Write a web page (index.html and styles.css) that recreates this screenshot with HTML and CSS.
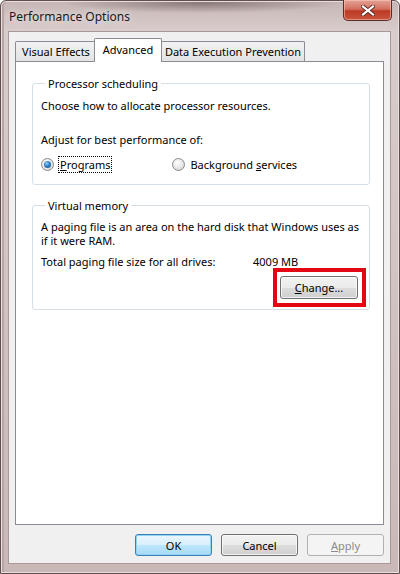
FILE: index.html
```html
<!DOCTYPE html>
<html lang="en">
<head>
    <meta charset="UTF-8">
    <title>Performance Options</title>
    <link rel="stylesheet" href="styles.css">
</head>
<body>
    <div class="window">
        <div class="titlebar">
            <span class="title">Performance Options</span>
            <button class="close-btn" aria-label="Close">
                <svg width="14" height="11" viewBox="0 0 14 11">
                    <path d="M2 1.5 L12 9.5 M12 1.5 L2 9.5" stroke="#5a2a22" stroke-width="4" stroke-linecap="square"/>
                    <path d="M2 1.5 L12 9.5 M12 1.5 L2 9.5" stroke="#fff" stroke-width="2.2" stroke-linecap="square"/>
                </svg>
            </button>
        </div>

        <div class="client">
            <div class="tabs">
                <div class="tab tab-visual">Visual Effects</div>
                <div class="tab tab-advanced active">Advanced</div>
                <div class="tab tab-dep">Data Execution Prevention</div>
            </div>

            <div class="panel">
                <fieldset class="group group-cpu">
                    <legend>Processor scheduling</legend>
                    <p>Choose how to allocate processor resources.</p>
                    <p class="adjust">Adjust for best performance of:</p>
                    <div class="radio-row">
                        <label class="radio-item">
                            <span class="radio checked"></span>
                            <span class="focus-label"><u>P</u>rograms</span>
                        </label>
                        <label class="radio-item radio-bg">
                            <span class="radio"></span>
                            <span>Background <u>s</u>ervices</span>
                        </label>
                    </div>
                </fieldset>

                <fieldset class="group group-vm">
                    <legend>Virtual memory</legend>
                    <p>A paging file is an area on the hard disk that Windows uses as if it were RAM.</p>
                    <div class="total-row">
                        <span class="total-label">Total paging file size for all drives:</span>
                        <span>4009 MB</span>
                    </div>
                    <div class="change-row">
                        <div class="highlight">
                            <button class="btn btn-change"><u>C</u>hange...</button>
                        </div>
                    </div>
                </fieldset>
            </div>

            <div class="buttons">
                <button class="btn btn-default">OK</button>
                <button class="btn">Cancel</button>
                <button class="btn" disabled><u>A</u>pply</button>
            </div>
        </div>
    </div>
</body>
</html>
```

FILE: styles.css
```css
* {
    box-sizing: border-box;
    margin: 0;
    padding: 0;
}

body {
    width: 400px;
    height: 574px;
    overflow: hidden;
    font-family: "Noto Sans", "Liberation Sans", sans-serif;
    font-size: 11px;
    color: #000;
    background: #fff;
}

.window {
    width: 400px;
    height: 574px;
    display: flex;
    flex-direction: column;
    padding: 0 8px 9px 7px;
    border: 1px solid #5f4f4f;
    border-radius: 6px 6px 0 0;
    background:
        radial-gradient(ellipse 140px 10px at 200px 2px, rgba(90, 70, 70, 0.55), transparent),
        linear-gradient(to bottom, #c6b6b5 0, #d8cdcc 30px, #c9b8b6 100%);
    box-shadow: inset 0 0 0 1px #e8dede, inset 2px 0 0 1px #b9a5a3;
}

/* Title bar */
.titlebar {
    height: 30px;
    display: flex;
    align-items: flex-start;
    margin-right: -1px;
}

.title {
    padding-top: 7px;
    padding-left: 1px;
    font-size: 12px;
    color: #1a1a1a;
    text-shadow: 0 0 6px rgba(255, 255, 255, 0.9);
}

.close-btn {
    margin-left: auto;
    margin-top: -1px;
    width: 49px;
    height: 21px;
    display: flex;
    align-items: center;
    justify-content: center;
    border: 1px solid #5a2c28;
    border-top: none;
    border-radius: 0 0 5px 5px;
    background: linear-gradient(to bottom, #e3a396 0, #d4705f 45%, #bc3a25 55%, #c8543d 100%);
    box-shadow: inset 0 0 0 1px rgba(255, 210, 200, 0.5);
}

/* Client area */
.client {
    flex: 1;
    display: flex;
    flex-direction: column;
    background: #f0f0f0;
    border: 1px solid #a8989a;
    padding: 0 6px 0 6px;
}

.tabs {
    display: flex;
    align-items: flex-end;
    margin-top: 6px;
    position: relative;
    z-index: 1;
}

.tab {
    height: 20px;
    display: flex;
    align-items: center;
    justify-content: center;
    white-space: nowrap;
    border: 1px solid #898c95;
    border-bottom: none;
    border-radius: 2px 2px 0 0;
    background: linear-gradient(to bottom, #f2f2f2, #e3e3e3);
    margin-right: -1px;
}

.tab-visual { width: 82px; }
.tab-dep { width: 144px; }

.tab.active {
    height: 24px;
    width: 68px;
    margin: 0 -2px -1px -2px;
    padding-bottom: 3px;
    background: #fff;
    position: relative;
    z-index: 2;
}

.tab-dep {
    margin-left: 1px;
}

.panel {
    height: 464px;
    background: #fff;
    border: 1px solid #898c95;
    padding: 14px 13px 0 16px;
    display: flex;
    flex-direction: column;
}

/* Group boxes */
.group {
    border: 1px solid #d5dfe5;
    border-radius: 3px;
    padding: 8px 8px 0 8px;
    box-shadow: inset 1px 1px 0 #fff;
}

.group legend {
    margin-left: 4px;
    padding: 0 3px;
    line-height: 15px;
}

.group p {
    line-height: 14px;
}

.group-cpu {
    height: 109px;
}

.adjust {
    margin-top: 20px;
}

.radio-row {
    display: flex;
    margin-top: 10px;
}

.radio-item {
    display: flex;
    align-items: center;
    gap: 5px;
}

.radio-bg {
    margin-left: 61px;
}

.radio {
    width: 13px;
    height: 13px;
    border-radius: 50%;
    border: 1px solid #8a8a8a;
    background: radial-gradient(circle at 40% 35%, #ffffff 0, #e8e8e8 50%, #cfcfcf 100%);
    display: flex;
    align-items: center;
    justify-content: center;
}

.radio.checked::after {
    content: "";
    width: 7px;
    height: 7px;
    border-radius: 50%;
    background: radial-gradient(circle at 40% 35%, #9fd3f5 0, #2f80c3 45%, #144c86 100%);
}

.focus-label {
    outline: 1px dotted #000;
    outline-offset: 0;
    padding: 0 1px;
}

.group-vm {
    margin-top: 13px;
    height: 112px;
    padding-top: 7px;
}

.total-row {
    display: flex;
    margin-top: 7px;
    line-height: 14px;
}

.total-label {
    width: 212px;
}

.change-row {
    display: flex;
    justify-content: flex-end;
    margin-top: -1px;
    margin-right: -5px;
}

.highlight {
    border: 4px solid #e30613;
    padding: 4px 4px 4px 3px;
}

/* Buttons */
.btn {
    width: 77px;
    height: 22px;
    font-family: inherit;
    font-size: 11px;
    color: #000;
    border: 1px solid #707070;
    border-radius: 3px;
    background: linear-gradient(to bottom, #f2f2f2 0, #ebebeb 50%, #dddddd 51%, #cfcfcf 100%);
    box-shadow: inset 0 0 0 1px rgba(255, 255, 255, 0.7);
}

.btn-change {
    width: 78px;
    height: 23px;
}

.btn-default {
    border-color: #3c7fb1;
    background: linear-gradient(to bottom, #eaf6fd 0, #d9f0fc 50%, #bee6fd 51%, #a7d9f5 100%);
    box-shadow: inset 0 0 0 1px #8ed4f5;
}

.btn:disabled {
    color: #8a8a8a;
    border-color: #adb2b5;
    background: #f4f4f4;
    box-shadow: none;
}

.buttons {
    display: flex;
    justify-content: flex-end;
    gap: 9px;
    margin-top: 9px;
}
```
